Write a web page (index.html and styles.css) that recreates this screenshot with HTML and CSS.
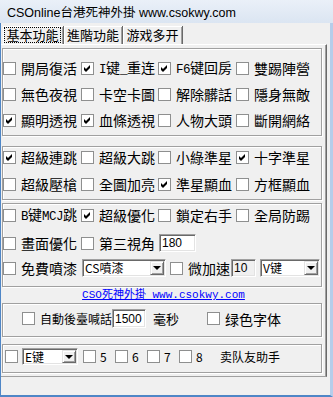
FILE: index.html
```html
<!DOCTYPE html>
<html lang="zh-Hant">
<head>
    <meta charset="UTF-8">
    <meta name="viewport" content="width=device-width, initial-scale=1.0">
    <link rel="stylesheet" href="styles.css">
    <title>CSOnline台港死神外掛</title>
</head>
<body>

    <div class="window">
        <div class="titlebar">CSOnline台港死神外掛 www.csokwy.com</div>

        <div class="client">
            <div class="tabs">
                <div class="tab tab-1"><span class="focus">基本功能</span></div>
                <div class="tab tab-2">進階功能</div>
                <div class="tab tab-3">游戏多开</div>
            </div>

            <div class="panel">
                <div class="group g1">
                    <div class="row">
                        <label class="item c1"><span class="cb"></span>開局復活</label>
                        <label class="item c2"><span class="cb"><svg viewBox="0 0 11 11"><path d="M2 4l2 2 4-4v3l-4 4-2-2z"/></svg></span><span class="txt"><span class="lat">I</span>键<span class="lat">_</span>重连</span></label>
                        <label class="item c3"><span class="cb"><svg viewBox="0 0 11 11"><path d="M2 4l2 2 4-4v3l-4 4-2-2z"/></svg></span><span class="txt"><span class="lat">F6</span>键回房</span></label>
                        <label class="item"><span class="cb"></span>雙踢陣營</label>
                    </div>
                    <div class="row">
                        <label class="item c1"><span class="cb"></span>無色夜視</label>
                        <label class="item c2"><span class="cb"></span>卡空卡圖</label>
                        <label class="item c3"><span class="cb"></span>解除髒話</label>
                        <label class="item"><span class="cb"></span>隱身無敵</label>
                    </div>
                    <div class="row">
                        <label class="item c1"><span class="cb"><svg viewBox="0 0 11 11"><path d="M2 4l2 2 4-4v3l-4 4-2-2z"/></svg></span>顯明透視</label>
                        <label class="item c2"><span class="cb"><svg viewBox="0 0 11 11"><path d="M2 4l2 2 4-4v3l-4 4-2-2z"/></svg></span>血條透視</label>
                        <label class="item c3"><span class="cb"></span>人物大頭</label>
                        <label class="item"><span class="cb"></span>斷開網絡</label>
                    </div>
                </div>

                <div class="group g2">
                    <div class="row">
                        <label class="item c1"><span class="cb"><svg viewBox="0 0 11 11"><path d="M2 4l2 2 4-4v3l-4 4-2-2z"/></svg></span>超級連跳</label>
                        <label class="item c2"><span class="cb"></span>超級大跳</label>
                        <label class="item c3"><span class="cb"></span>小綠準星</label>
                        <label class="item"><span class="cb"><svg viewBox="0 0 11 11"><path d="M2 4l2 2 4-4v3l-4 4-2-2z"/></svg></span>十字準星</label>
                    </div>
                    <div class="row">
                        <label class="item c1"><span class="cb"></span>超級壓槍</label>
                        <label class="item c2"><span class="cb"></span>全圖加亮</label>
                        <label class="item c3"><span class="cb"><svg viewBox="0 0 11 11"><path d="M2 4l2 2 4-4v3l-4 4-2-2z"/></svg></span>準星顯血</label>
                        <label class="item"><span class="cb"></span>方框顯血</label>
                    </div>
                </div>

                <div class="group g3">
                    <div class="row r1">
                        <label class="item c1"><span class="cb"></span><span class="txt"><span class="lat">B</span>键<span class="lat">MCJ</span>跳</span></label>
                        <label class="item c2"><span class="cb"><svg viewBox="0 0 11 11"><path d="M2 4l2 2 4-4v3l-4 4-2-2z"/></svg></span>超級優化</label>
                        <label class="item c3"><span class="cb"></span>鎖定右手</label>
                        <label class="item"><span class="cb"></span>全局防踢</label>
                    </div>
                    <div class="row r2">
                        <label class="item c1"><span class="cb"></span>畫面優化</label>
                        <label class="item c2"><span class="cb"></span>第三視角</label>
                        <input class="edit e180" value="180">
                    </div>
                    <div class="row r3">
                        <label class="item c1"><span class="cb"></span>免費噴漆</label>
                        <div class="combo k-cs"><span class="val">CS噴漆</span><span class="drop"></span></div>
                        <label class="item speed"><span class="cb"></span>微加速</label>
                        <input class="edit e10" value="10">
                        <div class="combo k-v"><span class="val">V键</span><span class="drop"></span></div>
                    </div>
                </div>

                <div class="link">CSO死神外掛 www.csokwy.com</div>

                <div class="group g4">
                    <div class="row">
                        <label class="item shout"><span class="cb"></span>自動後臺喊話</label>
                        <input class="edit e1500" value="1500">
                        <span class="ms">毫秒</span>
                        <label class="item green"><span class="cb"></span>绿色字体</label>
                    </div>
                </div>

                <div class="group g5">
                    <div class="row">
                        <span class="cb solo"></span>
                        <div class="combo k-e"><span class="val">E键</span><span class="drop"></span></div>
                        <label class="item num first"><span class="cb"></span>5</label>
                        <label class="item num"><span class="cb"></span>6</label>
                        <label class="item num"><span class="cb"></span>7</label>
                        <label class="item num"><span class="cb"></span>8</label>
                        <span class="helper">卖队友助手</span>
                    </div>
                </div>
            </div>

            <div class="status"></div>
        </div>
    </div>

</body>
</html>
```

FILE: styles.css
```css
*{
    box-sizing: border-box;
}

body{
    margin: 0;
    background-color: #f0f0f0;
}

.window{
    width: 333px;
    height: 397px;
    display: flex;
    flex-direction: column;
    overflow: hidden;
    font-family: "Noto Sans CJK TC", "Noto Sans CJK SC", sans-serif;
    font-size: 14px;
    line-height: 16px;
    color: #000;
}

.titlebar{
    height: 23px;
    flex-shrink: 0;
    padding: 6px 0 0 7px;
    font-family: "Liberation Sans", "Noto Sans CJK SC", sans-serif;
    font-size: 12.5px;
    line-height: 15px;
    white-space: nowrap;
    background: linear-gradient(#eaf0f8, #dbe5f2);
}

.client{
    flex: 1;
    display: flex;
    flex-direction: column;
    border-left: 1px solid #4f86c6;
    border-right: 3px solid #b6cdea;
    border-bottom: 2px solid #4f86c6;
}

/* tabs */

.tabs{
    height: 21px;
    flex-shrink: 0;
    display: flex;
    align-items: flex-end;
    padding-left: 2px;
}

.tab{
    height: 18px;
    padding-top: 1px;
    font-size: 13px;
    line-height: 15px;
    text-align: center;
    border-right: 1px solid #696969;
    box-shadow: inset 1px 1px 0 #fff, inset -1px 0 0 #a0a0a0;
}

.tab-1{
    width: 61px;
    padding-left: 1px;
    padding-right: 2px;
}

.tab-2{
    width: 59px;
}

.tab-3{
    width: 60px;
}

.focus{
    display: block;
    height: 16px;
    border: 1px dotted #000;
    line-height: 14px;
}

/* panel and group boxes */

.panel{
    width: 326px;
    height: 333px;
    flex-shrink: 0;
    border-top: 1px solid #fff;
    border-right: 1px solid #696969;
    border-bottom: 1px solid #a0a0a0;
    box-shadow: inset -1px 0 0 #a0a0a0;
}

.group{
    width: 320px;
    margin-left: 1px;
    border: 1px solid #a0a0a0;
    box-shadow: inset 1px 1px 0 #fff, 1px 1px 0 #fff;
}

.g1{
    margin-top: 3px;
    height: 88px;
    padding-top: 11px;
}

.g1 .row + .row{
    margin-top: 10px;
}

.g2{
    margin-top: 10px;
    height: 54px;
    padding-top: 2px;
}

.g2 .row + .row{
    margin-top: 11px;
}

.g3{
    margin-top: 3px;
    height: 84px;
    padding-top: 2px;
}

.g3 .row{
    height: 18px;
}

.g3 .r2{
    margin-top: 10px;
}

.g3 .r3{
    margin-top: 7px;
}

.g4{
    height: 34px;
    padding: 5px 0 0 19px;
}

.g4 .row{
    height: 19px;
}

.g5{
    margin-top: 7px;
    height: 29px;
    padding: 3px 0 0 2px;
    font-size: 12px;
}

.g5 .row{
    height: 17px;
}

.row{
    display: flex;
    align-items: center;
    height: 16px;
}

.item{
    display: flex;
    align-items: center;
    white-space: nowrap;
}

.c1{
    width: 78px;
}

.c2{
    width: 77px;
}

.c3{
    width: 78px;
}

/* half-width latin inside labels */
.txt{
    white-space: nowrap;
}

.lat{
    font-family: "Liberation Mono", monospace;
    font-size: 12.5px;
    letter-spacing: -0.5px;
}

/* checkbox */

.cb{
    width: 13px;
    height: 13px;
    flex-shrink: 0;
    margin-right: 5px;
    border: 1px solid #8e8f8f;
    background-color: #fff;
}

.cb svg{
    display: block;
    width: 11px;
    height: 11px;
    fill: #000;
}

.cb.solo{
    margin-right: 4px;
}

/* edit boxes and combos */

.edit{
    height: 18px;
    margin: 0;
    padding: 0 2px;
    font-family: "Liberation Sans", sans-serif;
    font-size: 12px;
    color: #000;
    background-color: #fff;
    border: 1px solid;
    border-color: #a0a0a0 #fff #fff #a0a0a0;
    box-shadow: inset 1px 1px 0 #696969, inset -1px -1px 0 #e3e3e3;
    outline: none;
}

.e180{
    width: 37px;
    margin-left: 1px;
}

.e10{
    width: 25px;
    margin-left: 1px;
    background-color: #f0f0f0;
}

.e1500{
    width: 34px;
    height: 19px;
}

.combo{
    display: flex;
    height: 18px;
    padding: 1px;
    font-size: 12px;
    line-height: 14px;
    background-color: #fff;
    border: 1px solid;
    border-color: #a0a0a0 #fff #fff #a0a0a0;
    box-shadow: inset 1px 1px 0 #696969, inset -1px -1px 0 #e3e3e3;
}

.combo .val{
    flex: 1;
    padding-left: 1px;
    white-space: nowrap;
}

.drop{
    width: 14px;
    display: flex;
    align-items: center;
    justify-content: center;
    background-color: #f0f0f0;
    border: 1px solid;
    border-color: #e3e3e3 #696969 #696969 #e3e3e3;
    box-shadow: inset 1px 1px 0 #fff, inset -1px -1px 0 #a0a0a0;
}

.drop::after{
    content: "";
    border-style: solid;
    border-width: 4px 4px 0;
    border-color: #000 transparent transparent;
}

.k-cs{
    width: 84px;
    margin-left: 1px;
}

.k-v{
    width: 60px;
    margin-left: 4px;
}

.k-e{
    width: 56px;
    height: 17px;
}

.speed{
    margin-left: 4px;
}

/* link row */

.link{
    height: 15px;
    margin-top: 1px;
    font-family: "Liberation Mono", "Noto Sans CJK TC", monospace;
    font-size: 11px;
    line-height: 15px;
    text-align: center;
    color: #0000ff;
    text-decoration: underline;
}

/* bottom rows */

.shout{
    font-size: 12px;
}

.ms{
    margin-left: 7px;
    font-size: 13px;
}

.green{
    margin-left: 28px;
}

.num{
    width: 32px;
}

.num .cb{
    margin-right: 4px;
}

.num.first{
    margin-left: 5px;
}

.helper{
    margin-left: 9px;
}

.status{
    flex: 1;
}
```
